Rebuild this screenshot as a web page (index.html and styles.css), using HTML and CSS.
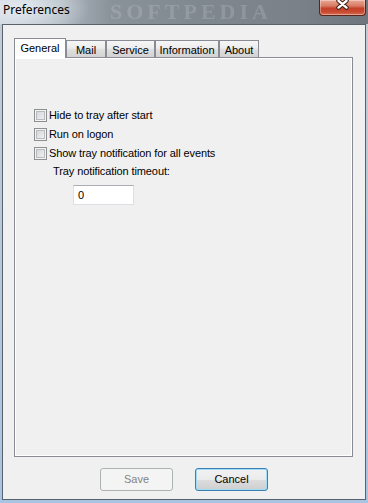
FILE: index.html
```html
<!DOCTYPE html>
<html>
<head>
<meta charset="utf-8">
<title>Preferences</title>
<link rel="stylesheet" href="styles.css">
</head>
<body>
<div class="window">
  <div class="titlebar">
    <span class="title">Preferences</span>
    <span class="wm-title">SOFTPEDIA</span>
    <div class="close">
      <svg width="47" height="16" viewBox="0 0 47 16">
        <path d="M19.5 1.8 L27.5 8.6 M27.5 1.8 L19.5 8.6" stroke="#3a1c16" stroke-width="4.4" stroke-linecap="round" fill="none"/>
        <path d="M19.5 1.8 L27.5 8.6 M27.5 1.8 L19.5 8.6" stroke="#ffffff" stroke-width="2.4" stroke-linecap="round" fill="none"/>
      </svg>
    </div>
  </div>
  <div class="client">
    <div class="tabstrip">
      <div class="tab sel t-general">General</div>
      <div class="tab t-mail">Mail</div>
      <div class="tab t-service">Service</div>
      <div class="tab t-info">Information</div>
      <div class="tab t-about">About</div>
    </div>
    <div class="panel">
      <div class="options">
        <div class="check"><span class="box"></span><span>Hide to tray after start</span></div>
        <div class="check"><span class="box"></span><span>Run on logon</span></div>
        <div class="check"><span class="box"></span><span>Show tray notification for all events</span></div>
        <div class="timeout-label">Tray notification timeout:</div>
        <div class="textbox">0</div>
      </div>
    </div>
    <div class="buttons">
      <div class="btn disabled">Save</div>
      <div class="btn focused">Cancel</div>
    </div>
  </div>
</div>
</body>
</html>
```
FILE: styles.css
```css
* { box-sizing: border-box; }
html, body { margin: 0; padding: 0; }
body {
  width: 368px;
  height: 503px;
  overflow: hidden;
  font-family: "Liberation Sans", Arial, sans-serif;
  font-size: 11px;
  color: #000;
}
.window {
  width: 368px;
  height: 503px;
  display: flex;
  flex-direction: column;
  background: linear-gradient(180deg, #c3ccd5 0%, #b9c9da 40%, #a9c4e2 100%);
}
.titlebar {
  position: relative;
  height: 24px;
  flex: none;
  display: flex;
  align-items: flex-start;
  background:
    radial-gradient(ellipse 70px 30px at 20px 8px, rgba(235,240,245,0.85), rgba(235,240,245,0) 100%),
    linear-gradient(90deg, #c9d2db 0%, #aeb7c0 16%, #8a929a 30%, #7f878f 55%, #7a8189 80%, #6f767d 100%);
}
.title {
  position: relative;
  z-index: 2;
  font-family: "Noto Sans", "Open Sans", sans-serif;
  font-size: 12px;
  line-height: 16px;
  padding: 2px 0 0 3px;
  color: #000;
}
.wm-title {
  position: absolute;
  left: 110px;
  top: 1px;
  font-family: "Liberation Serif", serif;
  font-weight: bold;
  font-size: 22px;
  line-height: 22px;
  letter-spacing: 4px;
  color: rgba(255,255,255,0.15);
  filter: blur(0.6px);
  z-index: 1;
}
.close {
  position: relative;
  z-index: 2;
  margin-left: auto;
  margin-right: 2px;
  width: 47px;
  height: 16px;
  border: 1px solid #5e2318;
  border-top: none;
  border-radius: 0 0 4px 4px;
  background: linear-gradient(180deg, #e9a996 0%, #d87a63 40%, #c5412a 55%, #c84a30 80%, #d8735a 100%);
  box-shadow: inset 0 0 0 1px rgba(255,255,255,0.35);
}
.close svg { display: block; margin: -1px 0 0 -1px; }

.client {
  flex: none;
  margin: 0 2px 0 2px;
  width: 364px;
  height: 476px;
  border: 1px solid #59616a;
  background: #f0f0f0;
  display: flex;
  flex-direction: column;
  padding: 13px 0 0 11px;
}
.tabstrip {
  display: flex;
  align-items: flex-end;
  height: 19px;
  position: relative;
  z-index: 2;
}
.tab {
  height: 17px;
  border: 1px solid #898c95;
  border-bottom: none;
  background: linear-gradient(180deg, #f6f6f6 0%, #ececec 45%, #dedede 55%, #d3d3d3 100%);
  padding-top: 3px;
  line-height: 13px;
  text-align: center;
  white-space: nowrap;
}
.tab.sel {
  height: 20px;
  margin-bottom: -1px;
  background: #ffffff;
  padding-top: 3px;
}
.t-general { width: 52px; }
.t-mail { width: 40px; }
.t-service { width: 49px; }
.t-info { width: 64px; }
.t-about { width: 40px; }

.panel {
  position: relative;
  width: 339px;
  height: 400px;
  border: 1px solid #898c95;
  background: #f0f0f0;
  box-shadow: inset 0 0 0 1px #ffffff;
  z-index: 1;
}
.options {
  position: relative;
  padding: 48px 0 0 19px;
  display: flex;
  flex-direction: column;
  align-items: flex-start;
  letter-spacing: -0.1px;
}
.check {
  height: 19px;
  display: flex;
  align-items: center;
  gap: 2px;
  line-height: 13px;
  white-space: nowrap;
}
.box {
  width: 13px;
  height: 13px;
  flex: none;
  border: 1px solid #8e8f8f;
  background: linear-gradient(135deg, #cdd0d4 0%, #e2e3e5 50%, #f6f6f6 100%);
  box-shadow: inset 0 0 0 1px #f4f4f4, inset 0 0 0 2px #b7babe;
}
.timeout-label {
  margin: 1px 0 0 19px;
  line-height: 14px;
}
.textbox {
  margin: 7px 0 0 39px;
  width: 61px;
  height: 20px;
  border: 1px solid #dcdfe4;
  border-top-color: #abadb3;
  background: #fff;
  padding-left: 4px;
  line-height: 18px;
}
.buttons {
  margin: 11px 0 0 -11px;
  display: flex;
  justify-content: center;
  gap: 22px;
}
.btn {
  width: 73px;
  height: 23px;
  border-radius: 3px;
  text-align: center;
  line-height: 21px;
}
.btn.disabled {
  border: 1px solid #adb2b5;
  background: #f4f4f4;
  color: #838383;
}
.btn.focused {
  border: 1px solid #3c7fb1;
  background: linear-gradient(180deg, #f2f2f2 0%, #ebebeb 50%, #dddddd 50%, #cfcfcf 100%);
  box-shadow: inset 0 0 0 1px #9fdcf5;
  color: #000;
}
```
